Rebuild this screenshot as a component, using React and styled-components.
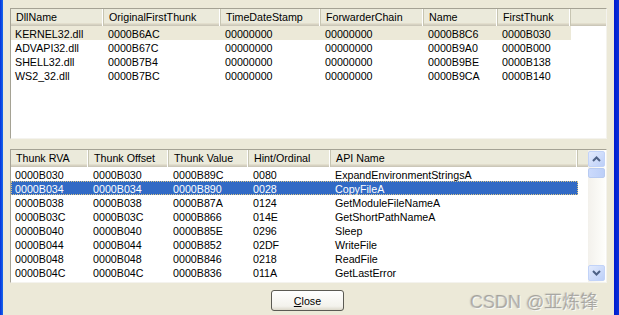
import React from "react";
import styled, { createGlobalStyle } from "styled-components";

const Global = createGlobalStyle`
  html, body { margin: 0; padding: 0; background: #ece9d8; }
  body { font-family: "Liberation Sans", Arial, sans-serif; }
`;

const Window = styled.div`
  position: relative;
  width: 619px;
  height: 315px;
  display: flex;
  overflow: hidden;
  background: #ece9d8;
  font-size: 10.7px;
  color: #000;
`;

const Edge = styled.div`
  width: ${(p) => p.w}px;
  flex: none;
  background: ${(p) => p.bg};
`;

const Content = styled.div`
  flex: 1;
  display: flex;
  flex-direction: column;
  padding: 8px 6px 0 7px;
`;

const ListView = styled.div`
  height: ${(p) => p.h}px;
  flex: none;
  background: #fff;
  border: 1px solid #a5a294;
  border-right-color: #f4f3ee;
  border-bottom-color: #f4f3ee;
  box-sizing: border-box;
  display: flex;
  overflow: hidden;
`;

const Table = styled.div`
  flex: 1;
  display: flex;
  flex-direction: column;
`;

const Header = styled.div`
  display: grid;
  grid-template-columns: ${(p) => p.cols} 1fr;
  height: 17px;
  flex: none;
  background: #ebeadb;
  box-shadow: inset 0 -1px #cbc7b8, inset 0 -2px #d6d2c2, inset 0 -3px #e2decd;
`;

const HeaderCell = styled.div`
  display: flex;
  align-items: center;
  padding: 0 0 1px 5px;
  white-space: nowrap;
  overflow: hidden;
  border-right: 1px solid #c7c5b2;
  box-shadow: inset -1px 0 #fff;
  box-sizing: border-box;
  &:last-child { border-right: none; box-shadow: none; }
`;

const Row = styled.div`
  display: grid;
  grid-template-columns: ${(p) => p.cols};
  width: max-content;
  height: 14px;
  box-sizing: border-box;
  background: ${(p) => (p.sel === "focus" ? "#316ac5" : p.sel === "dim" ? "#ece9d8" : "transparent")};
  color: ${(p) => (p.sel === "focus" ? "#fff" : "#000")};
  outline: ${(p) => (p.sel === "focus" ? "1px dotted #d8c68a" : "none")};
  outline-offset: -1px;
`;

const Cell = styled.div`
  display: flex;
  align-items: center;
  padding: 2px 0 0 4px;
  white-space: nowrap;
  overflow: hidden;
`;

const ScrollBar = styled.div`
  width: 17px;
  flex: none;
  margin-right: 1px;
  display: flex;
  flex-direction: column;
  background: linear-gradient(90deg, #f3f1ec, #fefefb);
`;

const ScrollButton = styled.div`
  height: 16px;
  margin: ${(p) => (p.down ? "auto 0 1px" : "1px 0 0")};
  border: 1px solid #c2d3f8;
  border-radius: 2px;
  background: linear-gradient(135deg, #e3ebfd, #bccff8);
  display: flex;
  align-items: center;
  justify-content: center;
  box-sizing: border-box;
`;

const Thumb = styled.div`
  height: 10px;
  margin-top: 1px;
  border: 1px solid #b8cbf1;
  border-radius: 2px;
  background: linear-gradient(90deg, #cbdafc, #bccff8);
  box-sizing: border-box;
`;

const Gap = styled.div`
  height: 10px;
  flex: none;
`;

const ButtonBar = styled.div`
  display: flex;
  justify-content: center;
  padding-top: 7px;
  padding-right: 2px;
`;

const Button = styled.div`
  width: 73px;
  height: 21px;
  box-sizing: border-box;
  border: 1px solid #5b5a53;
  border-radius: 3px;
  background: linear-gradient(#ffffff, #f3f2ec 80%, #dcd8cb);
  display: flex;
  align-items: center;
  justify-content: center;
  u { text-decoration: underline; }
`;

const Watermark = styled.div`
  position: absolute;
  left: 470px;
  top: 287px;
  font-family: "Liberation Sans", "Noto Sans CJK SC", sans-serif;
  font-size: 18px;
  color: rgba(120, 120, 120, 0.5);
  text-shadow: 1px 1px 0 rgba(255, 255, 255, 0.7), -1px 0 1px rgba(140, 140, 140, 0.35);
  white-space: nowrap;
`;

const Arrow = ({ down }) => (
  <svg width="9" height="6" viewBox="0 0 9 6">
    <path
      d={down ? "M1 1 L4.5 4.5 L8 1" : "M1 5 L4.5 1.5 L8 5"}
      fill="none"
      stroke="#4d6185"
      strokeWidth="2"
    />
  </svg>
);

const dllCols = "93px 117px 100px 103px 74px 73px";
const dllHead = ["DllName", "OriginalFirstThunk", "TimeDateStamp", "ForwarderChain", "Name", "FirstThunk"];
const dlls = [
  ["KERNEL32.dll", "0000B6AC", "00000000", "00000000", "0000B8C6", "0000B030"],
  ["ADVAPI32.dll", "0000B67C", "00000000", "00000000", "0000B9A0", "0000B000"],
  ["SHELL32.dll", "0000B7B4", "00000000", "00000000", "0000B9BE", "0000B138"],
  ["WS2_32.dll", "0000B7BC", "00000000", "00000000", "0000B9CA", "0000B140"],
];

const thunkCols = "78px 80px 80px 82px 247px";
const thunkHead = ["Thunk RVA", "Thunk Offset", "Thunk Value", "Hint/Ordinal", "API Name"];
const thunks = [
  ["0000B030", "0000B030", "0000B89C", "0080", "ExpandEnvironmentStringsA"],
  ["0000B034", "0000B034", "0000B890", "0028", "CopyFileA"],
  ["0000B038", "0000B038", "0000B87A", "0124", "GetModuleFileNameA"],
  ["0000B03C", "0000B03C", "0000B866", "014E", "GetShortPathNameA"],
  ["0000B040", "0000B040", "0000B85E", "0296", "Sleep"],
  ["0000B044", "0000B044", "0000B852", "02DF", "WriteFile"],
  ["0000B048", "0000B048", "0000B846", "0218", "ReadFile"],
  ["0000B04C", "0000B04C", "0000B836", "011A", "GetLastError"],
];

export default function App() {
  return (
    <Window>
      <Global />
      <Edge w={3} bg="linear-gradient(90deg, #0831d9, #166aee)" />
      <Content>
        <ListView h={131}>
          <Table>
            <Header cols={dllCols}>
              {dllHead.map((h) => (
                <HeaderCell key={h}>{h}</HeaderCell>
              ))}
              <HeaderCell />
            </Header>
            {dlls.map((r, i) => (
              <Row key={r[0]} cols={dllCols} sel={i === 0 ? "dim" : ""}>
                {r.map((c, j) => (
                  <Cell key={j}>{c}</Cell>
                ))}
              </Row>
            ))}
          </Table>
        </ListView>
        <Gap />
        <ListView h={134}>
          <Table>
            <Header cols={thunkCols}>
              {thunkHead.map((h) => (
                <HeaderCell key={h}>{h}</HeaderCell>
              ))}
              <HeaderCell />
            </Header>
            {thunks.map((r, i) => (
              <Row key={r[0]} cols={thunkCols} sel={i === 1 ? "focus" : ""}>
                {r.map((c, j) => (
                  <Cell key={j}>{c}</Cell>
                ))}
              </Row>
            ))}
          </Table>
          <ScrollBar>
            <ScrollButton>
              <Arrow />
            </ScrollButton>
            <Thumb />
            <ScrollButton down>
              <Arrow down />
            </ScrollButton>
          </ScrollBar>
        </ListView>
        <ButtonBar>
          <Button>
            <span>
              <u>C</u>lose
            </span>
          </Button>
        </ButtonBar>
      </Content>
      <Edge w={6} bg="linear-gradient(90deg, #ece9d8 0 1px, #0019cf 1px, #0831d9)" />
      <Watermark>CSDN @亚炼锋</Watermark>
    </Window>
  );
}
